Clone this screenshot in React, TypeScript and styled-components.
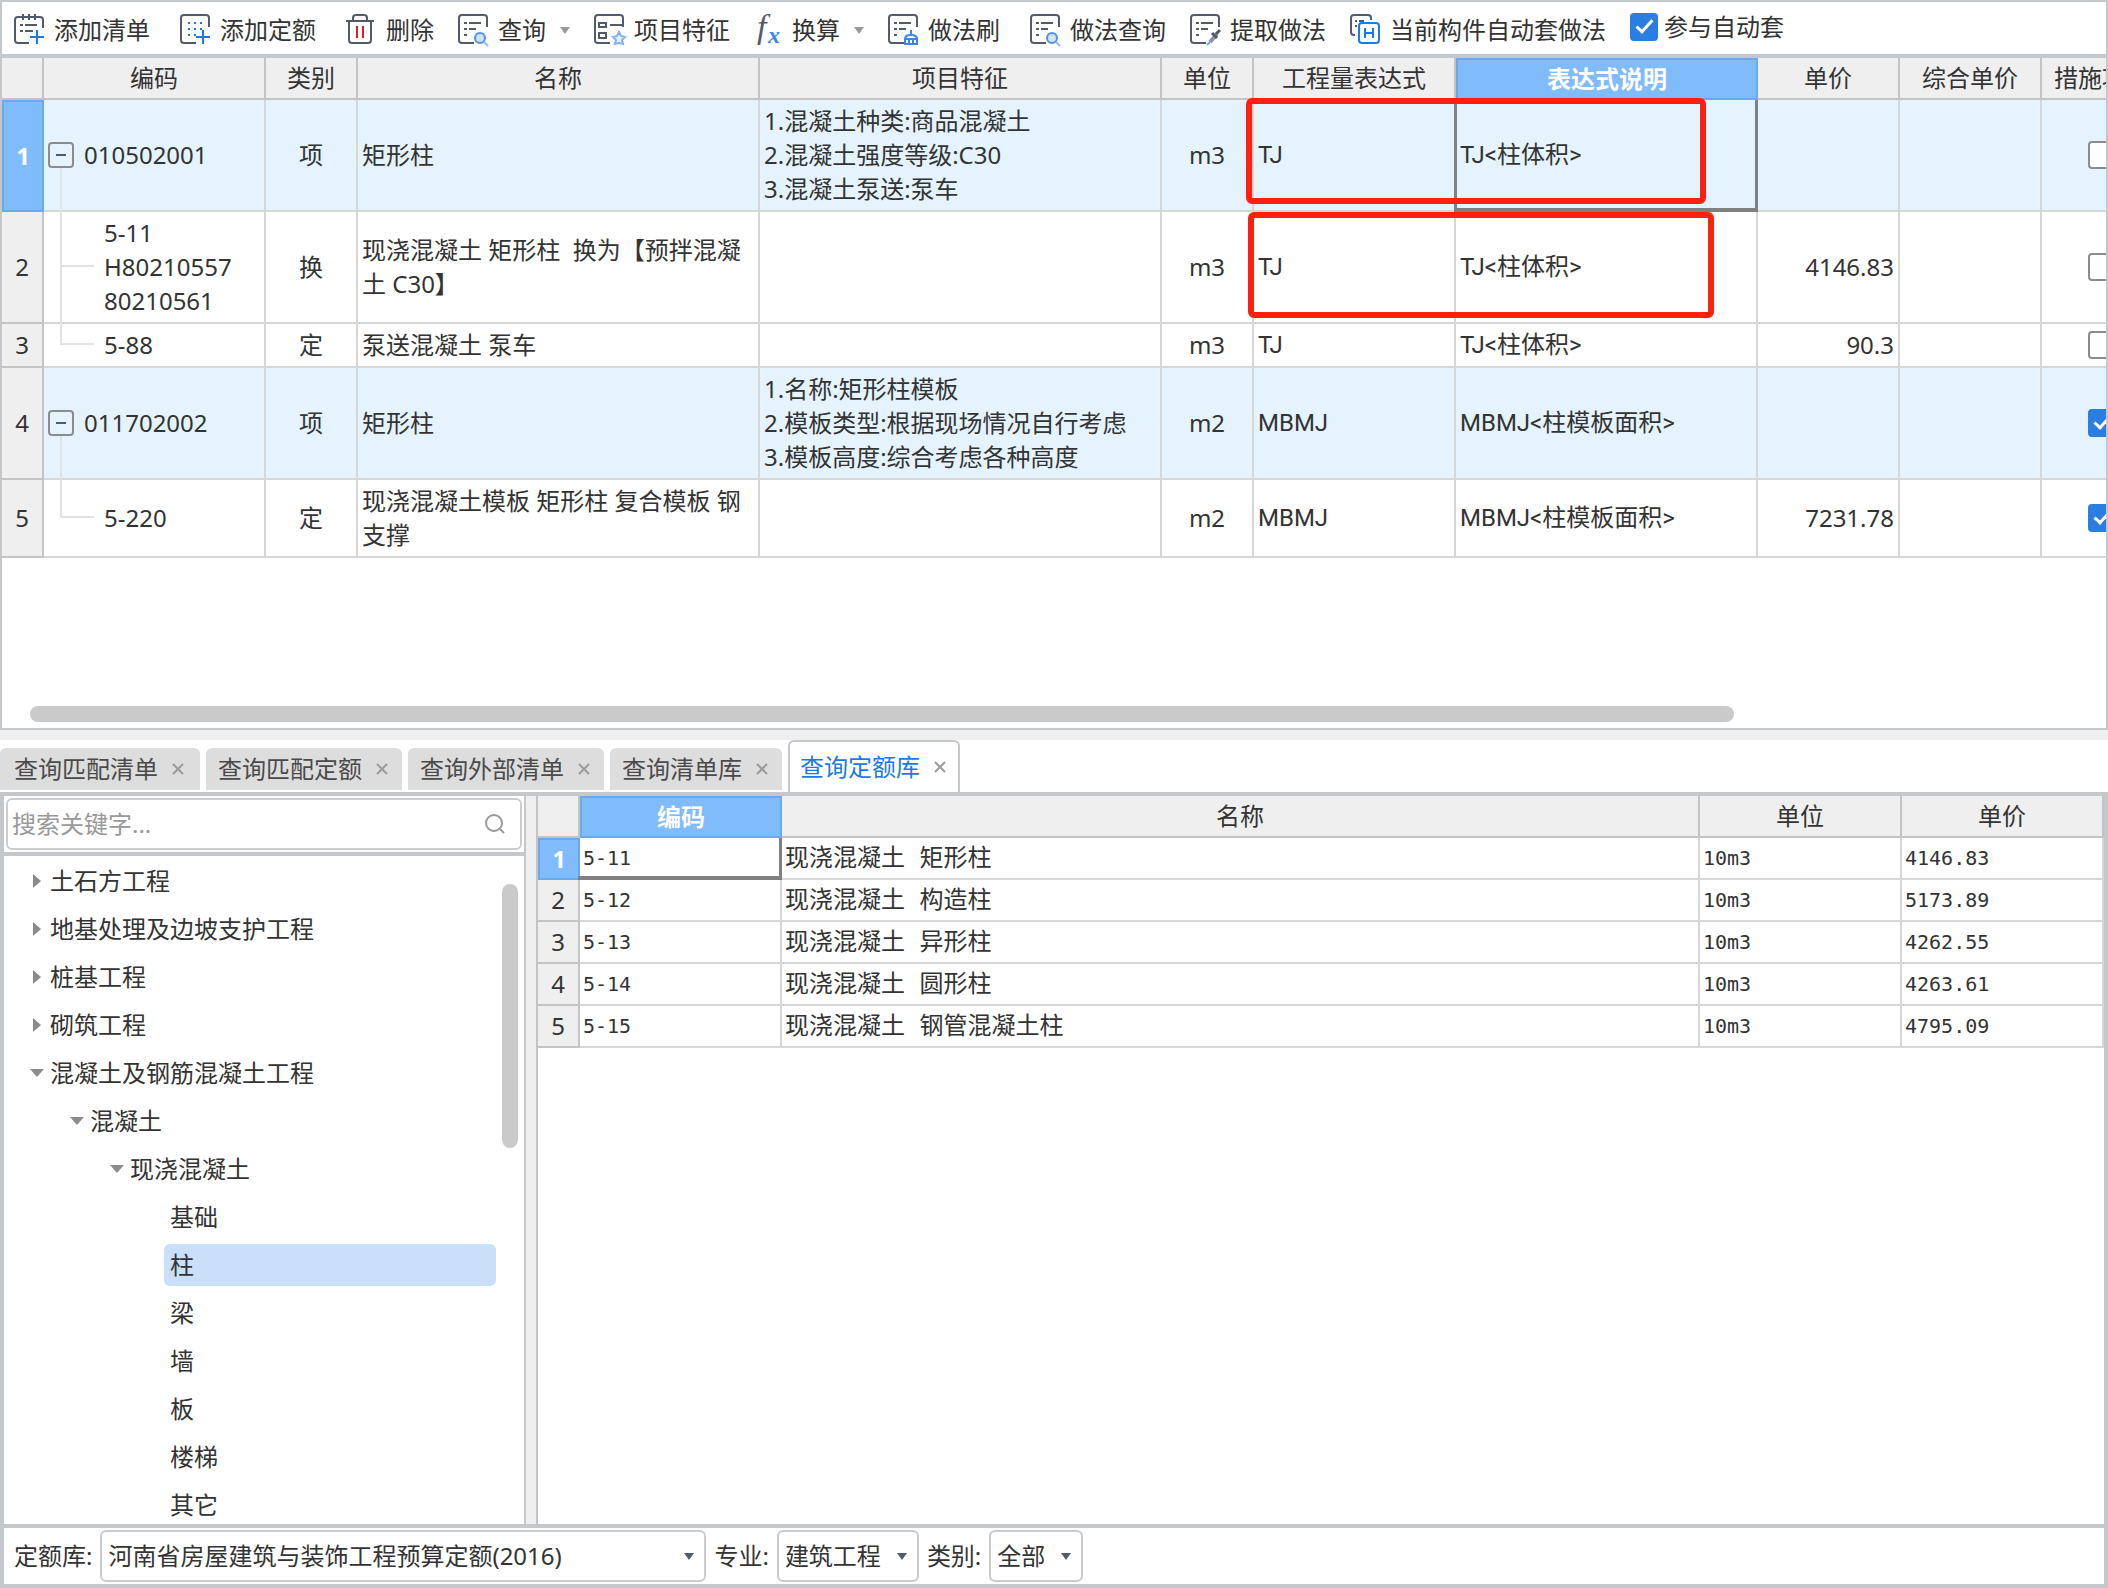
import React, { useState } from "react";
import styled, { createGlobalStyle, css } from "styled-components";

const color = {
  text: "#333333",
  frame: "#c4c8cc",
  headLine: "#c4c4c4",
  cellLine: "#d6d6d6",
  headFill: "#efefef",
  rowFill: "#e5f3ff",
  pick: "#80bbfb",
  pickLine: "#6aa9ea",
  link: "#1a7ae6",
  ink: "#525a6b",
  thumb: "#cacaca",
};

const uiFont = `"Noto Sans", "Noto Sans CJK SC", sans-serif`;
const formulaFont = `Roboto, "Noto Sans CJK SC", sans-serif`;
const monoFont = `"DejaVu Sans Mono", "Noto Sans CJK SC", monospace`;

const GlobalStyle = createGlobalStyle`
  *, *::before, *::after { box-sizing: border-box; }
  body { margin: 0; background: #fff; }
  body, button, input, select {
    font-family: ${uiFont};
    font-size: 24px;
    line-height: 34px;
    color: ${color.text};
  }
  button { padding: 0; border: 0; background: none; white-space: nowrap; cursor: pointer; }
`;

const Page = styled.div`
  display: grid;
  grid-template-columns: minmax(0, 1fr);
  grid-template-rows: minmax(0, 730fr) 10px minmax(0, 848fr);
  height: 100vh;
  overflow: hidden;
`;

const Upper = styled.section`
  display: flex;
  flex-direction: column;
  min-height: 0;
  border: 2px solid ${color.frame};
`;

const PageSplitter = styled.div`
  background: ${color.headFill};
`;

/* ---------- toolbar ---------- */

const Toolbar = styled.div`
  display: flex;
  flex: none;
  height: 56px;
  padding: 4px 0 0 12px;
  border-bottom: 4px solid ${color.frame};
`;

const ToolButton = styled.button<{ $wide?: boolean }>`
  display: flex;
  align-items: center;
  gap: 10px;
  height: 48px;
  margin-right: ${(p) => (p.$wide ? 30 : 24)}px;
`;

const Glyph = styled.svg`
  flex: none;
  fill: none;
  stroke: ${color.ink};
  stroke-width: 2;
`;

const Caret = styled.span`
  margin-left: 4px;
  border: 5px solid transparent;
  border-top: 7px solid #999;
  border-bottom: 0;
`;

const CheckLabel = styled.label`
  display: flex;
  align-items: center;
  gap: 6px;
  height: 42px;
  white-space: nowrap;
`;

const Tick = styled.input`
  appearance: none;
  position: relative;
  flex: none;
  width: 28px;
  height: 28px;
  margin: 0;
  border: 2px solid #8c8c8c;
  border-radius: 4px;
  background: #fff;

  &:checked {
    border-color: #2a7de1;
    background: #2a7de1;
  }
  &:checked::after {
    content: "";
    position: absolute;
    left: 8px;
    top: 1px;
    width: 9px;
    height: 17px;
    border: solid #fff;
    border-width: 0 3px 3px 0;
    transform: rotate(42deg);
  }
`;

const Sheet = () => (
  <path d="M16 29H4a3 3 0 0 1-3-3V4a3 3 0 0 1 3-3h22a3 3 0 0 1 3 3v9" />
);
const ListLines = () => <path d="M6 9h3M11 9h12M6 15h3M11 15h7M6 21h3" />;
const Plus = () => <path d="M23 16v14M16 23h14" stroke={color.link} />;
const Lens = () => (
  <g stroke="#4a94ef">
    <circle cx="22" cy="24" r="5" fill="#cfe3fb" />
    <path d="M26 28l4 4" stroke="#8fbcf5" />
  </g>
);

const drawings = {
  addList: (
    <>
      <path d="M15 29H4a3 3 0 0 1-3-3V6a3 3 0 0 1 3-3h22a3 3 0 0 1 3 3v8M9 0v6M15 0v6M21 0v6" />
      <path d="M6 11h3M11 11h12M6 17h3M11 17h8" />
      <Plus />
    </>
  ),
  addQuota: (
    <>
      <Sheet />
      <path d="M8 9h2M14 9h2M20 9h2M8 15h2M14 15h2M20 15h2M8 21h2M14 21h2" stroke={color.link} />
      <Plus />
    </>
  ),
  remove: (
    <>
      <path d="M0 7h28M7 7V4a3 3 0 0 1 3-3h8a3 3 0 0 1 3 3v3M3 7v19a3 3 0 0 0 3 3h16a3 3 0 0 0 3-3V7" />
      <path d="M11 12v12M17 12v12" stroke="#e02020" />
    </>
  ),
  query: (
    <>
      <Sheet />
      <ListLines />
      <Lens />
    </>
  ),
  feature: (
    <>
      <Sheet />
      <path d="M5 9h7v4H5zM5 19h7v5H5zM16 11h13" />
      <path
        d="M25 18l2 4 4 1-3 3 1 4-4-1-4 1 1-4-3-3 4-1z"
        stroke="#7fb3f5"
        fill="#e4effd"
      />
    </>
  ),
  brush: (
    <>
      <Sheet />
      <ListLines />
      <path
        d="M23 16v5M17 25c0-3 2-4 6-4s6 1 6 4M17 25v5h12v-5M16 25h14M21 25v5M25 25v5"
        stroke="#3a88ec"
      />
    </>
  ),
  extract: (
    <>
      <Sheet />
      <ListLines />
      <path d="M20 28l7-8" strokeWidth="4" stroke="#8c94a6" />
      <path d="M22 19l5 5M26 20l4-4" strokeWidth="3" />
      <path d="M17 31l3-3" stroke="#6ea8f2" />
    </>
  ),
  current: (
    <>
      <path d="M5 21H4a3 3 0 0 1-3-3V4a3 3 0 0 1 3-3h14a3 3 0 0 1 3 3v2M5 7h2M9 7h5M5 12h2" />
      <g stroke={color.link}>
        <rect x="9" y="9" width="20" height="20" rx="3" />
        <path d="M15 14v10M23 14v10M15 19h8" />
      </g>
    </>
  ),
};

type DrawingName = keyof typeof drawings;

const ToolIcon = ({ name }: { name: DrawingName }) => (
  <Glyph width="30" height="32" viewBox="0 0 30 32" aria-hidden="true" overflow="visible">
    {drawings[name]}
  </Glyph>
);

const FunctionMark = styled.text`
  font-family: "Liberation Serif", serif;
  font-style: italic;
  font-size: 34px;
  fill: ${color.ink};
  stroke: none;
`;

const VariableMark = styled(FunctionMark)`
  font-size: 24px;
  font-weight: bold;
  fill: #3a88ec;
`;

const FormulaIcon = () => (
  <Glyph width="28" height="32" viewBox="0 0 28 32" aria-hidden="true" overflow="visible">
    <FunctionMark x="3" y="24">f</FunctionMark>
    <VariableMark x="14" y="29">x</VariableMark>
  </Glyph>
);

/* ---------- shared grid parts ---------- */

const GridTable = styled.table`
  table-layout: fixed;
  border-collapse: separate;
  border-spacing: 0;
`;

const picked = css`
  border: 2px solid ${color.pickLine};
  background: ${color.pick};
  color: #fff;
  font-weight: bold;
`;

const Head = styled.th<{ $picked?: boolean }>`
  position: relative;
  height: 42px;
  padding: 0;
  border-right: 2px solid ${color.headLine};
  border-bottom: 2px solid ${color.headLine};
  background: ${color.headFill};
  font-weight: normal;
  white-space: nowrap;
  ${(p) => p.$picked && picked}
`;

const RowHead = styled.th<{ $picked?: boolean }>`
  padding: 0;
  border-right: 2px solid ${color.headLine};
  border-bottom: 2px solid ${color.headLine};
  background: ${color.headFill};
  font-weight: normal;
  text-align: center;
  ${(p) => p.$picked && picked}
`;

const Cell = styled.td<{ $align?: "left" | "center" | "right"; $picked?: boolean }>`
  position: relative;
  padding: 4px;
  border-right: 2px solid ${color.cellLine};
  border-bottom: 2px solid ${color.cellLine};
  text-align: ${(p) => p.$align ?? "left"};
  white-space: pre-line;

  ${(p) =>
    p.$picked &&
    css`
      &::after {
        content: "";
        position: absolute;
        inset: 0 -2px -2px -2px;
        border: solid #808080;
        border-width: 0 3px 4px;
      }
    `}
`;

/* ---------- bill table ---------- */

const BillArea = styled.div`
  position: relative;
  flex: 1;
  display: flex;
  flex-direction: column;
  justify-content: space-between;
  align-items: flex-start;
  min-height: 0;
  padding-bottom: 6px;
  overflow: hidden;
`;

const BillTable = styled(GridTable)`
  width: 2162px;
`;

const BillRow = styled.tr<{ $parent: boolean }>`
  background: ${(p) => (p.$parent ? color.rowFill : "#fff")};
`;

const BillCell = styled(Cell)`
  line-height: 34px;
`;

const NameCell = styled(BillCell)`
  white-space: pre-wrap;
`;

const FormulaCell = styled(BillCell)`
  font-family: ${formulaFont};
`;

const CodeCell = styled(BillCell)<{ $kind: Kind }>`
  padding-left: ${(p) => (p.$kind === "parent" ? 4 : 60)}px;

  &::before {
    content: "";
    position: absolute;
    left: 16px;
    top: ${(p) => (p.$kind === "parent" ? "calc(50% + 13px)" : "0")};
    bottom: ${(p) => (p.$kind === "last" ? "50%" : "-2px")};
    width: 2px;
    background: #e2e2e2;
  }
  ${(p) =>
    p.$kind !== "parent" &&
    css`
      &::after {
        content: "";
        position: absolute;
        left: 16px;
        top: calc(50% - 2px);
        width: 34px;
        height: 2px;
        background: #e2e2e2;
      }
    `}
`;

const CodeLine = styled.div`
  display: flex;
  align-items: center;
  gap: 10px;
`;

const Fold = styled.button`
  display: grid;
  place-items: center;
  width: 26px;
  height: 26px;
  border: 2px solid #8c8c8c;
  border-radius: 4px;

  &::before {
    content: "";
    width: 10px;
    height: 2px;
    background: ${color.ink};
  }
`;

const TickCell = styled(BillCell)`
  line-height: 0;
`;

const HorizontalThumb = styled.div`
  width: 81%;
  height: 16px;
  margin-left: 28px;
  border-radius: 8px;
  background: ${color.thumb};
`;

const RedMark = styled.div<{ $x: number; $y: number; $w: number }>`
  position: absolute;
  left: ${(p) => p.$x}px;
  top: ${(p) => p.$y}px;
  width: ${(p) => p.$w}px;
  height: 106px;
  border: 6px solid #ff2010;
  border-radius: 6px;
  pointer-events: none;
`;

type Kind = "parent" | "child" | "last";

interface Bill {
  kind: Kind;
  code: string;
  type: string;
  name: string;
  feature: string;
  unit: string;
  formula: string;
  note: string;
  price: string;
  measure: boolean;
}

const bills: Bill[] = [
  {
    kind: "parent", code: "010502001", type: "项", name: "矩形柱",
    feature: "1.混凝土种类:商品混凝土\n2.混凝土强度等级:C30\n3.混凝土泵送:泵车",
    unit: "m3", formula: "TJ", note: "TJ<柱体积>", price: "", measure: false,
  },
  {
    kind: "child", code: "5-11\nH80210557\n80210561", type: "换",
    name: "现浇混凝土 矩形柱  换为【预拌混凝土 C30】", feature: "",
    unit: "m3", formula: "TJ", note: "TJ<柱体积>", price: "4146.83", measure: false,
  },
  {
    kind: "last", code: "5-88", type: "定", name: "泵送混凝土 泵车", feature: "",
    unit: "m3", formula: "TJ", note: "TJ<柱体积>", price: "90.3", measure: false,
  },
  {
    kind: "parent", code: "011702002", type: "项", name: "矩形柱",
    feature: "1.名称:矩形柱模板\n2.模板类型:根据现场情况自行考虑\n3.模板高度:综合考虑各种高度",
    unit: "m2", formula: "MBMJ", note: "MBMJ<柱模板面积>", price: "", measure: true,
  },
  {
    kind: "last", code: "5-220", type: "定", name: "现浇混凝土模板 矩形柱 复合模板 钢支撑", feature: "",
    unit: "m2", formula: "MBMJ", note: "MBMJ<柱模板面积>", price: "7231.78", measure: true,
  },
];

const billColumns: [string, number][] = [
  ["", 42], ["编码", 222], ["类别", 92], ["名称", 402], ["项目特征", 402], ["单位", 92],
  ["工程量表达式", 202], ["表达式说明", 302], ["单价", 142], ["综合单价", 142], ["措施项目", 122],
];

const BillGrid = () => (
  <BillArea>
    <BillTable>
      <colgroup>
        {billColumns.map(([, width], i) => (
          <col key={i} style={{ width }} />
        ))}
      </colgroup>
      <thead>
        <tr>
          {billColumns.map(([title], i) => (
            <Head key={i} scope="col" $picked={title === "表达式说明"}>{title}</Head>
          ))}
        </tr>
      </thead>
      <tbody>
        {bills.map((b, i) => (
          <BillRow key={i} $parent={b.kind === "parent"}>
            <RowHead scope="row" $picked={i === 0}>{i + 1}</RowHead>
            <CodeCell $kind={b.kind}>
              {b.kind === "parent" ? (
                <CodeLine>
                  <Fold type="button" aria-label="折叠" />
                  {b.code}
                </CodeLine>
              ) : (
                b.code
              )}
            </CodeCell>
            <BillCell $align="center">{b.type}</BillCell>
            <NameCell>{b.name}</NameCell>
            <BillCell>{b.feature}</BillCell>
            <BillCell $align="center">{b.unit}</BillCell>
            <FormulaCell>{b.formula}</FormulaCell>
            <FormulaCell $picked={i === 0}>{b.note}</FormulaCell>
            <BillCell $align="right">{b.price}</BillCell>
            <BillCell />
            <TickCell $align="center">
              <Tick type="checkbox" defaultChecked={b.measure} aria-label="措施项目" />
            </TickCell>
          </BillRow>
        ))}
      </tbody>
    </BillTable>
    <HorizontalThumb />
    <RedMark $x={1244} $y={40} $w={460} />
    <RedMark $x={1246} $y={154} $w={466} />
  </BillArea>
);

/* ---------- lower pane ---------- */

const Lower = styled.section`
  display: flex;
  flex-direction: column;
  min-height: 0;
`;

const TabBar = styled.div`
  display: flex;
  align-items: flex-end;
  gap: 6px;
  flex: none;
  height: 56px;
  border-bottom: 4px solid ${color.frame};
`;

const Tab = styled.div<{ $active: boolean }>`
  display: flex;
  align-items: center;
  gap: 14px;
  height: 42px;
  margin-bottom: 2px;
  padding: 0 14px 0 12px;
  border-radius: 6px 6px 0 0;
  background: #dddddd;

  &:first-child {
    padding: 0 16px 0 14px;
  }
  ${(p) =>
    p.$active &&
    css`
      height: 52px;
      margin-bottom: 0;
      padding: 0 12px 0 10px;
      border: 2px solid ${color.frame};
      border-bottom: 0;
      background: #fff;
    `}
`;

const TabName = styled.button<{ $active: boolean }>`
  color: ${(p) => (p.$active ? color.link : "#4a4a4a")};
`;

const TabClose = styled.button`
  display: flex;
  width: 12px;
`;

const Body = styled.div`
  display: flex;
  flex: 1;
  min-height: 0;
  border: solid ${color.frame};
  border-width: 0 4px 4px;
`;

const Sidebar = styled.aside`
  display: flex;
  flex-direction: column;
  flex: none;
  width: 522px;
  border-right: 2px solid ${color.frame};
`;

const SearchRow = styled.div`
  padding: 2px;
  border-bottom: 4px solid ${color.frame};
`;

const SearchBox = styled.label`
  display: flex;
  align-items: center;
  height: 52px;
  padding: 0 14px 0 4px;
  border: 2px solid #cccccc;
  border-radius: 6px;
`;

const SearchInput = styled.input`
  flex: 1;
  min-width: 0;
  padding: 0;
  border: 0;
  outline: 0;
  background: none;

  &::placeholder {
    color: #999;
  }
`;

const TreeArea = styled.div`
  display: flex;
  flex: 1;
  min-height: 0;
  overflow: hidden;
`;

const Tree = styled.ul`
  flex: 1;
  min-width: 0;
  margin: 0;
  padding: 1px 0;
  list-style: none;
`;

const TreeItem = styled.li<{ $level: number }>`
  display: flex;
  align-items: center;
  height: 48px;
  padding-left: ${(p) => 26 + p.$level * 40}px;
`;

const Arrow = styled.span<{ $state: "open" | "closed" | "leaf" }>`
  display: grid;
  place-items: center;
  flex: none;
  width: 14px;

  &::before {
    content: "";
    ${(p) =>
      p.$state === "open" &&
      css`
        border: 7px solid transparent;
        border-top: 8px solid #8c8c8c;
        border-bottom: 0;
      `}
    ${(p) =>
      p.$state === "closed" &&
      css`
        border: 7px solid transparent;
        border-left: 8px solid #8c8c8c;
        border-right: 0;
      `}
  }
`;

const TreeLabel = styled.button<{ $picked: boolean }>`
  flex: 1;
  height: 42px;
  padding: 0 6px;
  border-radius: 6px;
  background: ${(p) => (p.$picked ? "#c9dffa" : "none")};
  text-align: left;
`;

const VerticalThumb = styled.div`
  flex: none;
  width: 16px;
  height: 264px;
  margin: 28px 6px 0;
  border-radius: 8px;
  background: ${color.thumb};
`;

const PaneSplitter = styled.div`
  flex: none;
  width: 10px;
  background: ${color.headFill};
`;

const QuotaArea = styled.div`
  flex: 1;
  min-width: 0;
  border-left: 2px solid ${color.headLine};
  overflow: hidden;
`;

const QuotaTable = styled(GridTable)`
  width: 100%;
`;

const QuotaCell = styled(Cell)<{ $latin?: boolean }>`
  height: 42px;
  padding: 0 3px;
  font-family: ${monoFont};
  font-size: ${(p) => (p.$latin ? 20 : 24)}px;
  line-height: 36px;

  &::after {
    border-left: 0;
  }
`;

const QuotaRowHead = styled(RowHead)`
  line-height: 36px;
`;

const nodes: [string, number, "open" | "closed" | "leaf"][] = [
  ["土石方工程", 0, "closed"],
  ["地基处理及边坡支护工程", 0, "closed"],
  ["桩基工程", 0, "closed"],
  ["砌筑工程", 0, "closed"],
  ["混凝土及钢筋混凝土工程", 0, "open"],
  ["混凝土", 1, "open"],
  ["现浇混凝土", 2, "open"],
  ["基础", 3, "leaf"],
  ["柱", 3, "leaf"],
  ["梁", 3, "leaf"],
  ["墙", 3, "leaf"],
  ["板", 3, "leaf"],
  ["楼梯", 3, "leaf"],
  ["其它", 3, "leaf"],
];

const quotas = [
  ["5-11", "现浇混凝土 矩形柱", "10m3", "4146.83"],
  ["5-12", "现浇混凝土 构造柱", "10m3", "5173.89"],
  ["5-13", "现浇混凝土 异形柱", "10m3", "4262.55"],
  ["5-14", "现浇混凝土 圆形柱", "10m3", "4263.61"],
  ["5-15", "现浇混凝土 钢管混凝土柱", "10m3", "4795.09"],
];

const QuotaGrid = () => (
  <QuotaArea>
    <QuotaTable>
      <colgroup>
        <col style={{ width: 42 }} />
        <col style={{ width: 202 }} />
        <col />
        <col style={{ width: 202 }} />
        <col style={{ width: 202 }} />
      </colgroup>
      <thead>
        <tr>
          <Head />
          <Head scope="col" $picked>编码</Head>
          <Head scope="col">名称</Head>
          <Head scope="col">单位</Head>
          <Head scope="col">单价</Head>
        </tr>
      </thead>
      <tbody>
        {quotas.map(([code, name, unit, price], i) => (
          <tr key={code}>
            <QuotaRowHead scope="row" $picked={i === 0}>{i + 1}</QuotaRowHead>
            <QuotaCell $latin $picked={i === 0}>{code}</QuotaCell>
            <QuotaCell>{name}</QuotaCell>
            <QuotaCell $latin>{unit}</QuotaCell>
            <QuotaCell $latin>{price}</QuotaCell>
          </tr>
        ))}
      </tbody>
    </QuotaTable>
  </QuotaArea>
);

/* ---------- filter bar ---------- */

const FilterBar = styled.div`
  display: flex;
  align-items: center;
  gap: 8px;
  flex: none;
  height: 60px;
  padding-left: 10px;
  border: solid ${color.frame};
  border-width: 0 4px 4px;
  white-space: nowrap;
`;

const Picker = styled.span<{ $width: number }>`
  position: relative;
  flex: 0 1 ${(p) => p.$width}px;

  &::after {
    content: "";
    position: absolute;
    right: 12px;
    top: 23px;
    border: 5px solid transparent;
    border-top: 7px solid ${color.ink};
    border-bottom: 0;
    pointer-events: none;
  }
`;

const PickerSelect = styled.select`
  appearance: none;
  display: block;
  width: 100%;
  height: 52px;
  padding: 0 6px;
  border: 2px solid #cccccc;
  border-radius: 6px;
  background: #fff;
`;

const filters = [
  { id: "library", label: "定额库:", value: "河南省房屋建筑与装饰工程预算定额(2016)", width: 606 },
  { id: "major", label: "专业:", value: "建筑工程", width: 142 },
  { id: "category", label: "类别:", value: "全部", width: 94 },
];

const tabNames = ["查询匹配清单", "查询匹配定额", "查询外部清单", "查询清单库", "查询定额库"];

export default function App() {
  const [tab, setTab] = useState("查询定额库");
  const [node, setNode] = useState("柱");

  return (
    <>
      <GlobalStyle />
      <Page>
        <Upper>
          <Toolbar>
            <ToolButton type="button" $wide><ToolIcon name="addList" />添加清单</ToolButton>
            <ToolButton type="button" $wide><ToolIcon name="addQuota" />添加定额</ToolButton>
            <ToolButton type="button"><ToolIcon name="remove" />删除</ToolButton>
            <ToolButton type="button"><ToolIcon name="query" />查询<Caret /></ToolButton>
            <ToolButton type="button"><ToolIcon name="feature" />项目特征</ToolButton>
            <ToolButton type="button"><FormulaIcon />换算<Caret /></ToolButton>
            <ToolButton type="button" $wide><ToolIcon name="brush" />做法刷</ToolButton>
            <ToolButton type="button"><ToolIcon name="query" />做法查询</ToolButton>
            <ToolButton type="button"><ToolIcon name="extract" />提取做法</ToolButton>
            <ToolButton type="button"><ToolIcon name="current" />当前构件自动套做法</ToolButton>
            <CheckLabel>
              <Tick type="checkbox" defaultChecked />
              参与自动套
            </CheckLabel>
          </Toolbar>
          <BillGrid />
        </Upper>
        <PageSplitter />
        <Lower>
          <TabBar>
            {tabNames.map((name) => (
              <Tab key={name} $active={name === tab}>
                <TabName type="button" $active={name === tab} onClick={() => setTab(name)}>
                  {name}
                </TabName>
                <TabClose type="button" aria-label="关闭">
                  <svg width="12" height="12" viewBox="0 0 12 12" stroke="#9a9a9a" strokeWidth="2">
                    <path d="M1 1l10 10M11 1L1 11" />
                  </svg>
                </TabClose>
              </Tab>
            ))}
          </TabBar>
          <Body>
            <Sidebar>
              <SearchRow>
                <SearchBox>
                  <SearchInput type="text" placeholder="搜索关键字..." aria-label="搜索关键字" />
                  <svg width="22" height="22" viewBox="0 0 22 22" fill="none" stroke="#999" strokeWidth="2">
                    <circle cx="10" cy="10" r="8" />
                    <path d="M16 16l4 4" />
                  </svg>
                </SearchBox>
              </SearchRow>
              <TreeArea>
                <Tree>
                  {nodes.map(([name, level, state]) => (
                    <TreeItem key={name} $level={level}>
                      <Arrow $state={state} />
                      <TreeLabel type="button" $picked={name === node} onClick={() => setNode(name)}>
                        {name}
                      </TreeLabel>
                    </TreeItem>
                  ))}
                </Tree>
                <VerticalThumb />
              </TreeArea>
            </Sidebar>
            <PaneSplitter />
            <QuotaGrid />
          </Body>
          <FilterBar>
            {filters.map((f) => (
              <React.Fragment key={f.id}>
                <label htmlFor={f.id}>{f.label}</label>
                <Picker $width={f.width}>
                  <PickerSelect id={f.id}>
                    <option>{f.value}</option>
                  </PickerSelect>
                </Picker>
              </React.Fragment>
            ))}
          </FilterBar>
        </Lower>
      </Page>
    </>
  );
}
